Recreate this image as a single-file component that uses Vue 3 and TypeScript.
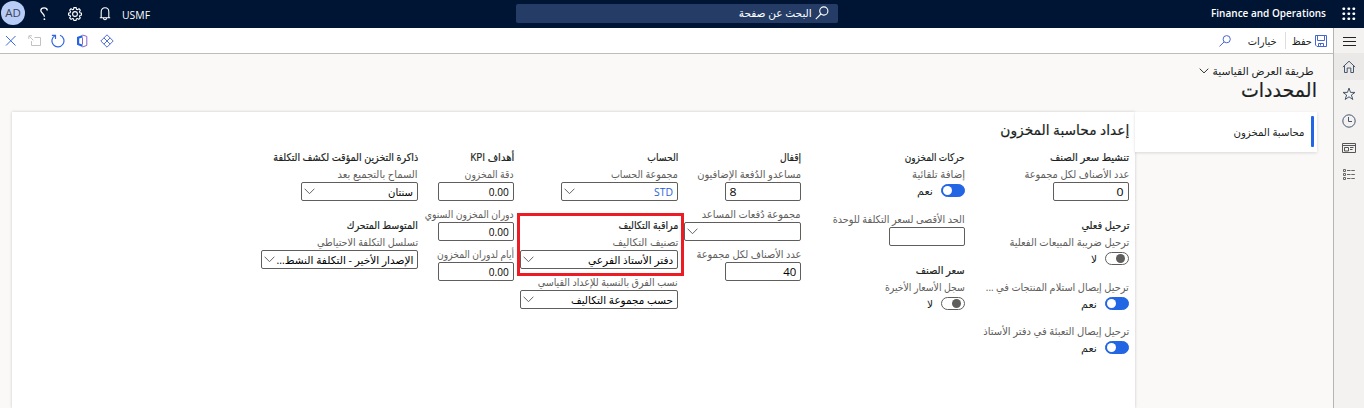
<script setup lang="ts">
interface Item {
  kind: 'heading' | 'label' | 'input' | 'select' | 'toggle'
  text?: string
  width?: number
  box?: number
  on?: boolean
  gap?: number
  link?: boolean
  start?: boolean
}
interface Column {
  width: number
  items: Item[]
}

const vFit = {
  mounted(el: HTMLElement, binding: { value: number | undefined }) {
    const natural = el.getBoundingClientRect().width
    if (!binding.value || !natural) return
    el.style.transform = `scaleX(${binding.value / natural})`
    el.style.marginInlineEnd = `${binding.value - natural}px`
  },
}

const heading = (text: string, width: number, gap = 0): Item => ({ kind: 'heading', text, width, gap })
const label = (text: string, width: number, gap = 0): Item => ({ kind: 'label', text, width, gap })
const input = (text = '', width = 0, start = false): Item => ({ kind: 'input', text, width, box: 76, start })
const select = (box: number, text = '', width = 0, link = false): Item => ({ kind: 'select', text, width, box, link })
const toggle = (on: boolean, gap = 2): Item => ({ kind: 'toggle', on, gap, text: on ? 'نعم' : 'لا', width: on ? 16 : 6 })

const columns: Column[] = [
  {
    width: 164,
    items: [
      heading('تنشيط سعر الصنف', 79),
      label('عدد الأصناف لكل مجموعة', 105),
      input('0', 7),
      heading('ترحيل فعلي', 48, 15),
      label('ترحيل ضريبة المبيعات الفعلية', 120),
      toggle(false),
      label('ترحيل إيصال استلام المنتجات في ...', 143, 14),
      toggle(true),
      label('ترحيل إيصال التعبئة في دفتر الأستاذ', 146, 13),
      toggle(true),
    ],
  },
  {
    width: 164,
    items: [
      heading('حركات المخزون', 60),
      label('إضافة تلقائية', 53),
      toggle(true),
      label('الحد الأقصى لسعر التكلفة للوحدة', 132, 14),
      input(),
      heading('سعر الصنف', 49, 15),
      label('سجل الأسعار الأخيرة', 80),
      toggle(false),
    ],
  },
  {
    width: 123,
    items: [
      heading('إقفال', 21),
      label('مساعدو الدُفعة الإضافيون', 104),
      input('8', 7, true),
      label('مجموعة دُفعات المساعد', 99, 5),
      select(117),
      label('عدد الأصناف لكل مجموعة', 105, 5),
      input('40', 13),
    ],
  },
  {
    width: 164,
    items: [
      heading('الحساب', 31),
      label('مجموعة الحساب', 67),
      select(117, 'STD', 19, true),
      heading('مراقبة التكاليف', 60, 15),
      label('تصنيف التكاليف', 66),
      select(158, 'دفتر الأستاذ الفرعي', 85),
      label('نسب الفرق بالنسبة للإعداد القياسي', 140, 5),
      select(158, 'حسب مجموعة التكاليف', 102),
    ],
  },
  {
    width: 96,
    items: [
      heading('أهداف KPI', 44),
      label('دقة المخزون', 49),
      input('0.00', 20),
      label('دوران المخزون السنوي', 89, 5),
      input('0.00', 20),
      label('أيام لدوران المخزون', 77, 5),
      input('0.00', 20),
    ],
  },
  {
    width: 158,
    items: [
      heading('ذاكرة التخزين المؤقت لكشف التكلفة', 145),
      label('السماح بالتجميع بعد', 80),
      select(117, 'سنتان', 25),
      heading('المتوسط المتحرك', 71, 15),
      label('تسلسل التكلفة الاحتياطي', 101),
      select(157, 'الإصدار الأخير - التكلفة النشط...', 137),
    ],
  },
]
</script>

<template>
  <div class="app" dir="rtl">
    <header class="top">
      <svg class="waffle" width="14" height="14" viewBox="0 0 14 14" fill="#fff">
        <template v-for="r in 3" :key="r">
          <rect v-for="c in 3" :key="c" :x="c * 5 - 4.5" :y="r * 5 - 4.5" width="2.6" height="2.6" rx="0.8" />
        </template>
      </svg>
      <div class="brand" dir="ltr"><span v-fit="115">Finance and Operations</span></div>
      <div class="search">
        <svg width="14" height="14" viewBox="0 0 14 14" fill="none" stroke="#fff" stroke-width="1.1"><circle cx="8.8" cy="5" r="4.1" /><path d="M5.9 8 .8 13.2" /></svg>
        <span v-fit="73">البحث عن صفحة</span>
      </div>
      <div class="tools" dir="ltr">
        <span class="avatar">AD</span>
        <svg class="help" width="10" height="14" viewBox="0 0 10 14" fill="none" stroke="#fff" stroke-width="1.3"><path d="M8.3 3.5C8.2 1.7 6.8.8 5.1.8 3.2.8 1.8 1.8 1.8 3.6c0 2.6 3.6 3 3.6 6.1" /><circle cx="5.4" cy="12.2" r=".9" fill="#fff" stroke="none" /></svg>
        <svg class="gear" width="14" height="14" viewBox="0 0 14 14" fill="none" stroke="#fff" stroke-width="1.1"><path d="M5.9.6h2.2l.4 1.7 1 .4L11 1.8l1.3 1.4-.8 1.6.4 1 1.6.3v2l-1.6.4-.4 1 .8 1.5-1.4 1.4-1.5-.9-1 .4-.4 1.6H5.9l-.4-1.6-1-.4-1.5.9L1.6 11l.9-1.5-.4-1L.5 8.1v-2l1.6-.3.4-1-.8-1.6L3 1.8l1.5.9 1-.4z" /><circle cx="7" cy="7" r="2.4" /></svg>
        <svg class="bell" width="12" height="14" viewBox="0 0 12 14" fill="none" stroke="#fff" stroke-width="1.1"><path d="M.8 10.8h10.4M2.2 10.7V4.8C2.2 2.5 3.7.8 6 .8s3.8 1.7 3.8 4v5.9M4.5 11.2c.1 2.1 2.9 2.1 3 0" /></svg>
        <span class="company"><span v-fit="28">USMF</span></span>
      </div>
    </header>
    <div class="body">
      <nav class="rail">
        <div class="rail-item menu"><svg width="14" height="10" viewBox="0 0 14 10" stroke="#222" stroke-width="1"><path d="M1 1.5h13M1 5.5h13M1 9.5h13" /></svg></div>
        <div class="rail-item active"><svg width="14" height="14" viewBox="0 0 14 14" fill="none" stroke="#45576a"><path d="M.9 7 7 1.2 13.1 7M2.5 5.7v6.8h2.7V8h3.6v4.5h2.7V5.7" /></svg></div>
        <div class="rail-item"><svg width="14" height="14" viewBox="0 0 14 14" fill="none" stroke="#45576a"><path d="m7 1.1 1.5 4.3H13L9.4 8l1.4 4.5L7 9.8l-3.8 2.7L4.6 8 1 5.4h4.5z" /></svg></div>
        <div class="rail-item"><svg width="14" height="14" viewBox="0 0 14 14" fill="none" stroke="#45576a"><circle cx="7" cy="7" r="6.2" /><path d="M6.5 3v4.5H10" /></svg></div>
        <div class="rail-item"><svg width="14" height="14" viewBox="0 0 14 14" fill="none" stroke="#555"><path d="M.5 2.5h13v9H.5zM1 4.5h12M2.5 6.5h4v3.5h-4zM8 6.5h3.5M8 8.5h2.5" /></svg></div>
        <div class="rail-item"><svg width="14" height="14" viewBox="0 0 14 14" fill="none" stroke="#666"><path d="M1.5 1.5h2v2h-2zM1.5 5.5h2v2h-2zM1.5 9.5h2v2h-2z" /><path d="M5 2.5h8M5 6.5h8M5 10.5h8" stroke-dasharray="3.5 .8" /></svg></div>
      </nav>
      <main class="main">
        <div class="actions">
          <svg class="save" width="12" height="12" viewBox="0 0 12 12" fill="none" stroke="#4766d4"><path d="M.5.5h11v11H2L.5 10zM2.5.8v4.7h7V.8M3.5 11V8.5h5V11M5.5 8.5v2" /></svg>
          <span class="act save-label"><span v-fit="20">حفظ</span></span>
          <i class="divider"></i>
          <span class="act options"><span v-fit="29">خيارات</span></span>
          <svg class="find" width="12" height="12" viewBox="0 0 12 12" fill="none" stroke="#4766d4"><circle cx="7.7" cy="4.2" r="3.6" /><path d="M5 7 .5 11.4" /></svg>
          <div class="left-icons" dir="ltr">
            <svg width="12" height="12" viewBox="0 0 12 12" fill="none" stroke="#3d68e0"><path d="m1 1 9.5 9.5M10.5 1 1 10.5" /></svg>
            <svg class="popout" width="14" height="12" viewBox="0 0 14 12" fill="none" stroke="#c2c2c2"><path d="M6.5 2.5h6v8h-9V6M.8 4V.8H4M1 1l4.3 4.3" /></svg>
            <svg class="refresh" width="14" height="14" viewBox="0 0 14 14" fill="none" stroke="#3168e0" stroke-width="1.2"><path d="M4.2 1.5A6 6 0 1 0 9 1.2M.9 1.4h3.6v3.5" /></svg>
            <svg class="office" width="12" height="14" viewBox="0 0 12 14" fill="none"><path d="m1 3 5.5-2v2.5L3.2 4.6v5l3.3.9V13L1 10.8z" fill="#2863df" /><path d="m6.5 1 4.3 1.4v9L6.5 13M6.5 3.5v7" stroke="#8765c5" /></svg>
            <svg class="apps" width="14" height="14" viewBox="0 0 14 14" fill="none" stroke="#5470cf"><path d="M7 .8 13.2 7 7 13.2.8 7zM3.9 3.9l6.2 6.2M10.1 3.9l-6.2 6.2" /></svg>
          </div>
        </div>
        <div class="view"><span v-fit="101">طريقة العرض القياسية</span><svg width="10" height="6" viewBox="0 0 10 6" fill="none" stroke="#333"><path d="m.7.7 4.3 4.2L9.3.7" /></svg></div>
        <h1><span v-fit="76">المحددات</span></h1>
        <div class="content">
          <aside class="tab"><span v-fit="71">محاسبة المخزون</span></aside>
          <section class="panel">
            <h2><span v-fit="129">إعداد محاسبة المخزون</span></h2>
            <div class="columns">
              <div v-for="(col, i) in columns" :key="i" class="col" :style="{ width: col.width + 'px' }">
                <i v-if="i === 3" class="highlight"></i>
                <div v-for="(item, j) in col.items" :key="j" :class="item.kind" :style="{ marginTop: (item.gap ?? 0) + 'px', width: item.box ? item.box + 'px' : undefined }">
                  <i v-if="item.kind === 'toggle'" class="switch" :class="{ on: item.on }"></i>
                  <span v-if="item.text" v-fit="item.width" :class="{ link: item.link, start: item.start, latin: /[0-9A-Z]/.test(item.text) && item.kind !== 'heading' }">{{ item.text }}</span>
                  <svg v-if="item.kind === 'select'" class="chev" width="11" height="7" viewBox="0 0 11 7" fill="none" stroke="#666"><path d="m.6.7 4.9 5 4.9-5" /></svg>
                </div>
              </div>
            </div>
          </section>
        </div>
      </main>
    </div>
  </div>
</template>

<style>
html,
body {
  overflow: hidden;
}
</style>

<style scoped>
* {
  box-sizing: border-box;
}
.app {
  width: 1364px;
  height: 408px;
  overflow: hidden;
  background: #faf9f8;
  font: 10.5px 'Open Sans', 'DejaVu Sans', sans-serif;
  color: #201f1e;
}
span {
  display: inline-block;
  white-space: nowrap;
  flex: none;
}
[dir='rtl'] span {
  transform-origin: right center;
}
[dir='ltr'] span {
  transform-origin: left center;
}
svg {
  display: block;
  flex: none;
}
.top {
  height: 28px;
  background: #001433;
  color: #fff;
  display: flex;
  align-items: center;
}
.waffle {
  margin-right: 8px;
}
.brand {
  width: 115px;
  margin-right: 16px;
  font-weight: 600;
  font-size: 11px;
  line-height: 26px;
  height: 28px;
}
.search {
  width: 322px;
  height: 19px;
  margin-top: -2px;
  margin-right: 373px;
  padding-right: 9px;
  border-radius: 2px;
  background: #253d66;
  display: flex;
  align-items: center;
  gap: 3px;
}
.tools {
  width: 200px;
  height: 28px;
  margin-right: auto;
  display: flex;
  align-items: center;
}
.avatar {
  width: 24px;
  height: 24px;
  margin-left: 1px;
  margin-top: -2px;
  border-radius: 50%;
  background: #b8ccf8;
  color: #3b4252;
  text-align: center;
  line-height: 24px;
  font-size: 11.5px;
}
.help {
  margin-left: 14px;
}
.gear {
  margin-left: 19px;
}
.bell {
  margin-left: 17px;
}
.company {
  margin-left: 11px;
  font-size: 11.5px;
}
.body {
  display: flex;
  height: 380px;
}
.rail {
  width: 31px;
  background: #f3f2f1;
  border-left: 1px solid #b5b5b3;
}
.rail-item {
  height: 27px;
  display: flex;
  align-items: center;
  justify-content: center;
}
.menu {
  height: 25px;
}
.active {
  background: #eae9e8;
}
.main {
  width: 1333px;
  display: flex;
  flex-direction: column;
}
.actions {
  height: 26px;
  flex: none;
  background: #fff;
  border-bottom: 1px solid #bdbdb9;
  display: flex;
  align-items: center;
}
.save {
  margin-right: 6px;
}
.save-label {
  width: 20px;
  margin-right: 3px;
}
.divider {
  width: 1px;
  height: 17px;
  margin-right: 6px;
  background: #ddd;
}
.options {
  width: 29px;
  margin-right: 8px;
}
.find {
  margin-right: 17px;
}
.left-icons {
  display: flex;
  align-items: center;
  width: 150px;
  padding-left: 5px;
  margin-right: auto;
}
.popout {
  margin-left: 11px;
}
.refresh {
  margin-left: 9px;
}
.office {
  margin-left: 11px;
}
.apps {
  margin-left: 12px;
}
.view {
  height: 20px;
  margin-top: 7px;
  padding-right: 19px;
  display: flex;
  align-items: center;
  gap: 4px;
}
h1 {
  margin: 0;
  height: 31px;
  line-height: 17px;
  padding-right: 16px;
  font-size: 20px;
  font-weight: 400;
  -webkit-text-stroke: 0.2px;
}
.content {
  display: flex;
  height: 296px;
}
.tab {
  position: relative;
  z-index: 1;
  width: 182px;
  height: 40px;
  margin-right: 16px;
  padding-right: 13px;
  background: #fff;
  line-height: 40px;
  box-shadow: 0 1px 3px #0002;
}
.tab::before {
  content: '';
  position: absolute;
  right: 3px;
  top: 4px;
  width: 3px;
  height: 31px;
  border-radius: 1px;
  background: #2266e3;
}
.panel {
  width: 1123px;
  background: #fff;
  box-shadow: 0 0 3px #0003;
  padding-right: 6px;
}
h2 {
  margin: 0;
  height: 36px;
  line-height: 35px;
  font-size: 14px;
  font-weight: 400;
  -webkit-text-stroke: 0.2px;
}
.columns {
  display: flex;
}
.col {
  position: relative;
  flex: none;
}
.highlight {
  position: absolute;
  width: 167px;
  height: 63px;
  right: -6px;
  top: 65px;
  border: 3px solid #ed1c24;
  z-index: 2;
}
.heading {
  height: 18px;
  line-height: 18px;
  -webkit-text-stroke: 0.2px;
}
.label {
  height: 16px;
  line-height: 16px;
  color: #605e5c;
}
.input,
.select {
  height: 19px;
  border: 1px solid #605e5c;
  border-radius: 2px;
  background: #fff;
  color: #000;
  padding: 0 4px;
  display: flex;
  align-items: center;
}
.latin {
  font-size: 11.5px;
}
.start {
  margin-right: auto;
}
.link {
  color: #2860dc;
}
.chev {
  margin-right: auto;
  margin-left: -2px;
}
.toggle {
  height: 13px;
  display: flex;
  align-items: center;
  gap: 8px;
}
.switch {
  position: relative;
  width: 24px;
  height: 13px;
  border: 1px solid #605e5c;
  border-radius: 7px;
}
.switch::after {
  content: '';
  position: absolute;
  right: 3px;
  top: 1px;
  width: 9px;
  height: 9px;
  border-radius: 50%;
  background: #605e5c;
}
.switch.on {
  background: #2266e3;
  border-color: #2266e3;
}
.switch.on::after {
  right: auto;
  left: 1px;
  background: #fff;
}
</style>
